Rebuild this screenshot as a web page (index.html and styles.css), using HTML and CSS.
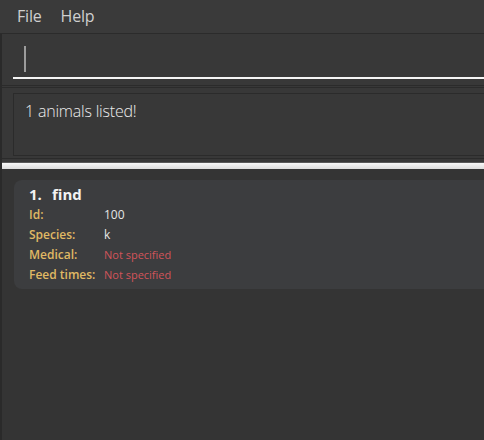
FILE: index.html
```html
<!DOCTYPE html>
<html>
<head>
<meta charset="utf-8">
<link rel="stylesheet" href="styles.css">
</head>
<body>
<div class="app">
  <div class="menubar">
    <span class="menu-item">File</span>
    <span class="menu-item">Help</span>
  </div>
  <div class="main">
    <div class="command">
      <div class="command-field">
        <span class="caret"></span>
      </div>
    </div>
    <div class="result-outer">
      <div class="result-box">1 animals listed!</div>
    </div>
    <div class="splitter"></div>
    <div class="list">
      <div class="card">
        <div class="card-title"><span class="index">1.</span>find</div>
        <div class="row"><span class="label">Id:</span><span class="value">100</span></div>
        <div class="row"><span class="label">Species:</span><span class="value">k</span></div>
        <div class="row"><span class="label">Medical:</span><span class="value missing">Not specified</span></div>
        <div class="row"><span class="label">Feed times:</span><span class="value missing">Not specified</span></div>
      </div>
    </div>
  </div>
</div>
</body>
</html>
```
FILE: styles.css
```css
html, body {
  margin: 0;
  padding: 0;
  width: 484px;
  height: 440px;
  overflow: hidden;
  background: #383838;
  font-family: "Open Sans", "Noto Sans", sans-serif;
}
.app {
  display: flex;
  flex-direction: column;
  height: 440px;
}
.menubar {
  height: 34px;
  box-sizing: border-box;
  background: #3a3a3a;
  border-bottom: 1px solid #2b2b2b;
  display: flex;
  align-items: center;
  gap: 19px;
  padding-left: 17px;
  padding-bottom: 2px;
}
.menu-item {
  color: #cfcfcf;
  font-size: 16px;
  letter-spacing: -0.2px;
}
.main {
  flex: 1;
  display: flex;
  flex-direction: column;
  border-left: 2px solid #2a2a2a;
}
.command {
  height: 52px;
  box-sizing: border-box;
  background: #383838;
  border-bottom: 1px solid #2b2b2b;
  padding: 12px 0 0 11px;
}
.command-field {
  height: 33px;
  border-bottom: 2px solid #f4f4f4;
  padding-left: 11px;
  box-sizing: border-box;
}
.caret {
  display: block;
  width: 2px;
  height: 26px;
  background: #9c9c9c;
}
.result-outer {
  margin-top: 1px;
  height: 72px;
  box-sizing: border-box;
  border-top: 1px solid #2b2b2b;
  border-bottom: 1px solid #2b2b2b;
  padding: 5px 0 2px 11px;
  background: #383838;
}
.result-box {
  height: 100%;
  box-sizing: border-box;
  border: 1px solid #2b2b2b;
  border-right: none;
  padding: 6px 0 0 11px;
  color: #ececec;
  font-size: 16px;
  font-weight: 300;
  letter-spacing: -0.2px;
}
.splitter {
  margin-top: 3px;
  height: 6px;
  background: linear-gradient(#f8f8f8, #dcdcdc);
  border-top: 1px solid #5a5a5a;
}
.list {
  flex: 1;
  background: #343434;
  padding: 11px 0 0 12px;
}
.card {
  background: #3c3d3f;
  border-radius: 8px 0 0 8px;
  height: 109px;
  box-sizing: border-box;
  padding: 5px 0 0 15px;
}
.card-title {
  color: #f2f2f2;
  font-size: 15px;
  font-weight: 700;
  line-height: 19px;
  display: flex;
}
.index {
  width: 23px;
}
.row {
  display: flex;
  align-items: center;
  height: 20px;
}
.label {
  width: 75px;
  color: #e0b964;
  font-size: 12px;
  font-weight: 600;
}
.value {
  color: #e6e6e6;
  font-size: 12px;
}
.value.missing {
  color: #d2545a;
  font-size: 11px;
}
```
